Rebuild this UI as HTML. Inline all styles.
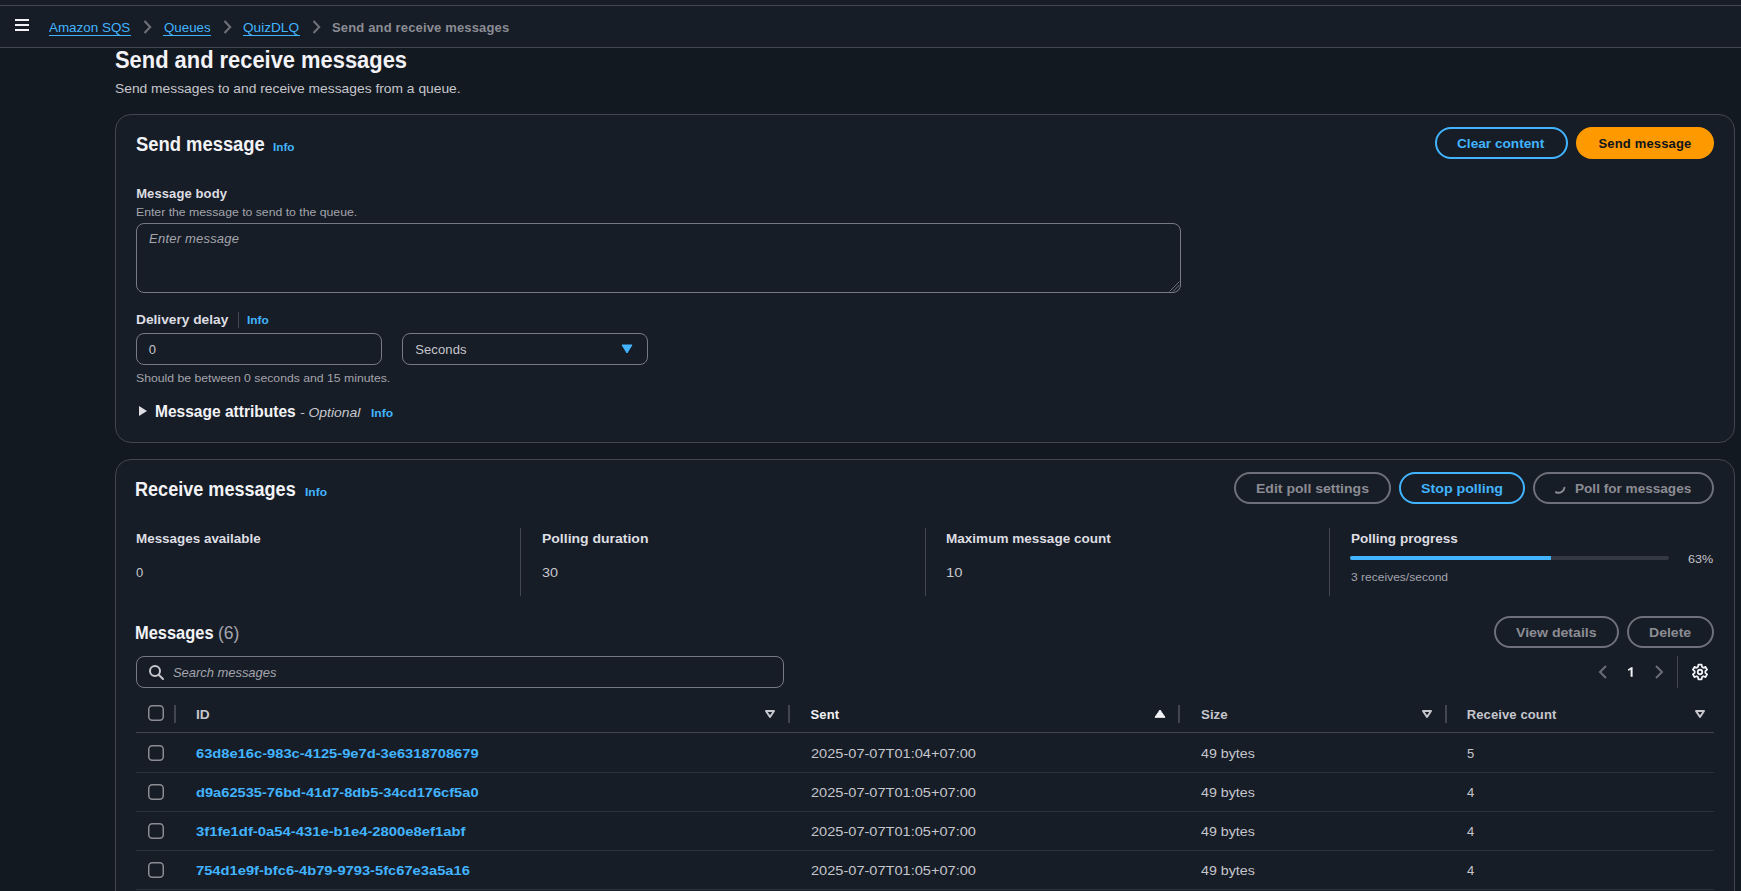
<!DOCTYPE html>
<html><head><meta charset="utf-8"><title>Send and receive messages</title>
<style>
html,body{margin:0;padding:0;}
body{width:1741px;height:891px;overflow:hidden;position:relative;background:#131920;font-family:"Liberation Sans",sans-serif;}
.t{position:absolute;white-space:nowrap;}
div{box-sizing:content-box;}
</style></head><body>
<div style="position:absolute;left:0px;top:0px;width:1741px;height:47px;background:#161d26"></div>
<div style="position:absolute;left:0px;top:5px;width:1741px;height:1px;background:#424650"></div>
<div style="position:absolute;left:0px;top:47px;width:1741px;height:1px;background:#424650"></div>
<div style="position:absolute;left:15px;top:19px;width:14px;height:2px;background:#f3f3f7"></div>
<div style="position:absolute;left:15px;top:24px;width:14px;height:2px;background:#f3f3f7"></div>
<div style="position:absolute;left:15px;top:29px;width:14px;height:2px;background:#f3f3f7"></div>
<div style="position:absolute;left:49px;top:35px;width:82px;height:1px;background:#42b4ff"></div>
<div style="position:absolute;left:163px;top:35px;width:48px;height:1px;background:#42b4ff"></div>
<div style="position:absolute;left:243px;top:35px;width:57px;height:1px;background:#42b4ff"></div>
<svg style="position:absolute;left:143px;top:20px" width="9" height="14" viewBox="0 0 9 14"><path d="M1.5 1 L7.2 7 L1.5 13" fill="none" stroke="#6f727b" stroke-width="2"/></svg>
<svg style="position:absolute;left:223px;top:20px" width="9" height="14" viewBox="0 0 9 14"><path d="M1.5 1 L7.2 7 L1.5 13" fill="none" stroke="#6f727b" stroke-width="2"/></svg>
<svg style="position:absolute;left:312px;top:20px" width="9" height="14" viewBox="0 0 9 14"><path d="M1.5 1 L7.2 7 L1.5 13" fill="none" stroke="#6f727b" stroke-width="2"/></svg>
<div style="position:absolute;left:115px;top:114px;width:1618px;height:327px;background:#161d26;border:1px solid #424650;border-radius:16px"></div>
<div style="position:absolute;left:1435px;top:127px;width:129px;height:28px;border:2px solid #42b4ff;border-radius:20px"></div>
<div style="position:absolute;left:1576px;top:127px;width:138px;height:32px;background:#ff9900;border-radius:20px"></div>
<div style="position:absolute;left:136px;top:223px;width:1043px;height:68px;border:1px solid #777a83;border-radius:8px"></div>
<svg style="position:absolute;left:1169px;top:281px" width="11" height="11" viewBox="0 0 11 11"><path d="M10.5 0.5 L0.5 10.5 M10.5 4 L4 10.5 M10.5 7.5 L7.5 10.5" stroke="#6e7079" stroke-width="1"/></svg>
<div style="position:absolute;left:238px;top:312px;width:1px;height:16px;background:#424650"></div>
<div style="position:absolute;left:136px;top:333px;width:244px;height:30px;border:1px solid #777a83;border-radius:8px"></div>
<div style="position:absolute;left:402px;top:333px;width:244px;height:30px;border:1px solid #777a83;border-radius:8px"></div>
<svg style="position:absolute;left:621px;top:344px" width="12" height="10" viewBox="0 0 12 10"><path d="M1 1 L11 1 L6 9 Z" fill="#42b4ff" stroke="#42b4ff" stroke-width="1" stroke-linejoin="round"/></svg>
<svg style="position:absolute;left:138px;top:405px" width="10" height="12" viewBox="0 0 10 12"><path d="M1 1 L9 6 L1 11 Z" fill="#dedee3"/></svg>
<div style="position:absolute;left:115px;top:459px;width:1618px;height:460px;background:#161d26;border:1px solid #424650;border-radius:16px"></div>
<div style="position:absolute;left:1234px;top:472px;width:153px;height:28px;border:2px solid #6e7079;border-radius:20px"></div>
<div style="position:absolute;left:1399px;top:472px;width:122px;height:28px;border:2px solid #42b4ff;border-radius:20px"></div>
<div style="position:absolute;left:1533px;top:472px;width:177px;height:28px;border:2px solid #6e7079;border-radius:20px"></div>
<svg style="position:absolute;left:1553px;top:481px" width="16" height="16" viewBox="0 0 16 16"><path d="M11.41 6.84 A6 6 0 0 1 2.96 11.24" fill="none" stroke="#8c8c94" stroke-width="2" stroke-linecap="round"/></svg>
<div style="position:absolute;left:520px;top:528px;width:1px;height:68px;background:#424650"></div>
<div style="position:absolute;left:925px;top:528px;width:1px;height:68px;background:#424650"></div>
<div style="position:absolute;left:1329px;top:528px;width:1px;height:68px;background:#424650"></div>
<div style="position:absolute;left:1350px;top:556px;width:319px;height:4px;background:#333843;border-radius:2px"></div>
<div style="position:absolute;left:1350px;top:556px;width:201px;height:4px;background:#42b4ff;border-radius:2px 0 0 2px"></div>
<div style="position:absolute;left:1494px;top:616px;width:121px;height:28px;border:2px solid #6e7079;border-radius:20px"></div>
<div style="position:absolute;left:1627px;top:616px;width:83px;height:28px;border:2px solid #6e7079;border-radius:20px"></div>
<div style="position:absolute;left:136px;top:656px;width:646px;height:30px;border:1px solid #777a83;border-radius:8px"></div>
<svg style="position:absolute;left:148px;top:664px" width="17" height="17" viewBox="0 0 17 17"><circle cx="7" cy="7" r="5" fill="none" stroke="#c6c6cd" stroke-width="2"/><path d="M10.7 10.7 L15 15" stroke="#c6c6cd" stroke-width="2" stroke-linecap="round"/></svg>
<svg style="position:absolute;left:1598px;top:665px" width="10" height="15" viewBox="0 0 10 15"><path d="M8 1 L2 7 L8 13" fill="none" stroke="#6a6d76" stroke-width="2"/></svg>
<svg style="position:absolute;left:1627px;top:667px" width="8" height="10" viewBox="0 0 8 10"><path d="M0.8 2.6 L4.2 0.3 L5.6 0.3 L5.6 9.8 L3.6 9.8 L3.6 2.6 L1.6 3.9 Z" fill="#f3f3f7"/></svg>
<svg style="position:absolute;left:1655px;top:665px" width="10" height="15" viewBox="0 0 10 15"><path d="M1 1 L7 7 L1 13" fill="none" stroke="#6a6d76" stroke-width="2"/></svg>
<div style="position:absolute;left:1677px;top:656px;width:1px;height:32px;background:#424650"></div>
<svg style="position:absolute;left:1691px;top:663px" width="18" height="18" viewBox="0 0 16 16">
<path d="M6.6 1.5h2.8l.4 2 1.2.7 1.9-.7 1.4 2.4-1.5 1.3v1.6l1.5 1.3-1.4 2.4-1.9-.7-1.2.7-.4 2H6.6l-.4-2-1.2-.7-1.9.7-1.4-2.4 1.5-1.3V7.2L1.7 5.9l1.4-2.4 1.9.7 1.2-.7z" fill="none" stroke="#f3f3f7" stroke-width="1.6" stroke-linejoin="round"/>
<circle cx="8" cy="8" r="2" fill="none" stroke="#f3f3f7" stroke-width="1.6"/></svg>
<svg style="position:absolute;left:148px;top:705px" width="16" height="16" viewBox="0 0 16 16"><rect x="0.75" y="0.75" width="14.5" height="14.5" rx="3.5" fill="none" stroke="#8c8c94" stroke-width="1.5"/></svg>
<div style="position:absolute;left:174px;top:705px;width:2px;height:18px;background:#424650"></div>
<svg style="position:absolute;left:764px;top:709px" width="12" height="10" viewBox="0 0 12 10"><path d="M2 2 L10 2 L6 8 Z" fill="none" stroke="#c6c6cd" stroke-width="2" stroke-linejoin="round"/></svg>
<div style="position:absolute;left:788px;top:705px;width:2px;height:18px;background:#424650"></div>
<svg style="position:absolute;left:1154px;top:709px" width="12" height="10" viewBox="0 0 12 10"><path d="M1 8.3 L11 8.3 L6 1 Z" fill="#f3f3f7" stroke="#f3f3f7" stroke-width="1" stroke-linejoin="round"/></svg>
<div style="position:absolute;left:1178px;top:705px;width:2px;height:18px;background:#424650"></div>
<svg style="position:absolute;left:1421px;top:709px" width="12" height="10" viewBox="0 0 12 10"><path d="M2 2 L10 2 L6 8 Z" fill="none" stroke="#c6c6cd" stroke-width="2" stroke-linejoin="round"/></svg>
<div style="position:absolute;left:1445px;top:705px;width:2px;height:18px;background:#424650"></div>
<svg style="position:absolute;left:1694px;top:709px" width="12" height="10" viewBox="0 0 12 10"><path d="M2 2 L10 2 L6 8 Z" fill="none" stroke="#c6c6cd" stroke-width="2" stroke-linejoin="round"/></svg>
<div style="position:absolute;left:136px;top:732px;width:1578px;height:1px;background:#424650"></div>
<svg style="position:absolute;left:148px;top:745px" width="16" height="16" viewBox="0 0 16 16"><rect x="0.75" y="0.75" width="14.5" height="14.5" rx="3.5" fill="none" stroke="#8c8c94" stroke-width="1.5"/></svg>
<div style="position:absolute;left:136px;top:772px;width:1578px;height:1px;background:#2a313b"></div>
<svg style="position:absolute;left:148px;top:784px" width="16" height="16" viewBox="0 0 16 16"><rect x="0.75" y="0.75" width="14.5" height="14.5" rx="3.5" fill="none" stroke="#8c8c94" stroke-width="1.5"/></svg>
<div style="position:absolute;left:136px;top:811px;width:1578px;height:1px;background:#2a313b"></div>
<svg style="position:absolute;left:148px;top:823px" width="16" height="16" viewBox="0 0 16 16"><rect x="0.75" y="0.75" width="14.5" height="14.5" rx="3.5" fill="none" stroke="#8c8c94" stroke-width="1.5"/></svg>
<div style="position:absolute;left:136px;top:850px;width:1578px;height:1px;background:#2a313b"></div>
<svg style="position:absolute;left:148px;top:862px" width="16" height="16" viewBox="0 0 16 16"><rect x="0.75" y="0.75" width="14.5" height="14.5" rx="3.5" fill="none" stroke="#8c8c94" stroke-width="1.5"/></svg>
<div style="position:absolute;left:136px;top:889px;width:1578px;height:1px;background:#2a313b"></div>
<div class="t" style="left:49.20px;top:18.90px;font-size:13px;line-height:17px;font-weight:400;color:#42b4ff;transform:scaleX(1.0318);transform-origin:0 0;">Amazon SQS</div>
<div class="t" style="left:163.70px;top:18.90px;font-size:13px;line-height:17px;font-weight:400;color:#42b4ff;transform:scaleX(1.0232);transform-origin:0 0;">Queues</div>
<div class="t" style="left:243.40px;top:18.90px;font-size:13px;line-height:17px;font-weight:400;color:#42b4ff;transform:scaleX(1.0478);transform-origin:0 0;">QuizDLQ</div>
<div class="t" style="left:332.00px;top:18.90px;font-size:13px;line-height:17px;font-weight:700;color:#8c8c94;letter-spacing:0.158px;">Send and receive messages</div>
<div class="t" style="left:115.00px;top:44.90px;font-size:23.5px;line-height:31px;font-weight:700;color:#f3f3f7;transform:scaleX(0.9313);transform-origin:0 0;">Send and receive messages</div>
<div class="t" style="left:115.00px;top:79.70px;font-size:13px;line-height:17px;font-weight:400;color:#c6c6cd;transform:scaleX(1.0629);transform-origin:0 0;">Send messages to and receive messages from a queue.</div>
<div class="t" style="left:135.90px;top:130.80px;font-size:20px;line-height:26px;font-weight:700;color:#f3f3f7;transform:scaleX(0.9196);transform-origin:0 0;">Send message</div>
<div class="t" style="left:273.20px;top:139.80px;font-size:11px;line-height:14px;font-weight:700;color:#42b4ff;transform:scaleX(1.0666);transform-origin:0 0;">Info</div>
<div class="t" style="left:1457.20px;top:135.20px;font-size:13px;line-height:17px;font-weight:700;color:#42b4ff;transform:scaleX(1.0496);transform-origin:0 0;">Clear content</div>
<div class="t" style="left:1598.50px;top:135.20px;font-size:13px;line-height:17px;font-weight:700;color:#0f141a;letter-spacing:0.162px;">Send message</div>
<div class="t" style="left:136.20px;top:185.00px;font-size:13px;line-height:17px;font-weight:700;color:#dedee3;letter-spacing:0.104px;">Message body</div>
<div class="t" style="left:136.20px;top:204.70px;font-size:11px;line-height:14px;font-weight:400;color:#a4a4ad;transform:scaleX(1.1128);transform-origin:0 0;">Enter the message to send to the queue.</div>
<div class="t" style="left:149.10px;top:229.90px;font-size:13px;line-height:17px;font-weight:400;color:#a4a4ad;font-style:italic;letter-spacing:0.200px;">Enter message</div>
<div class="t" style="left:136.20px;top:311.00px;font-size:13px;line-height:17px;font-weight:700;color:#dedee3;transform:scaleX(1.0554);transform-origin:0 0;">Delivery delay</div>
<div class="t" style="left:246.80px;top:313.00px;font-size:11px;line-height:14px;font-weight:700;color:#42b4ff;transform:scaleX(1.0813);transform-origin:0 0;">Info</div>
<div class="t" style="left:148.80px;top:341.10px;font-size:13px;line-height:17px;font-weight:400;color:#c6c6cd;">0</div>
<div class="t" style="left:415.20px;top:341.10px;font-size:13px;line-height:17px;font-weight:400;color:#c6c6cd;letter-spacing:0.118px;">Seconds</div>
<div class="t" style="left:136.20px;top:371.00px;font-size:11px;line-height:14px;font-weight:400;color:#a4a4ad;transform:scaleX(1.1117);transform-origin:0 0;">Should be between 0 seconds and 15 minutes.</div>
<div class="t" style="left:155.06px;top:400.90px;font-size:16.5px;line-height:21px;font-weight:700;color:#f3f3f7;transform:scaleX(0.9414);transform-origin:0 0;">Message attributes</div>
<div class="t" style="left:300.40px;top:403.90px;font-size:13px;line-height:17px;font-weight:400;color:#c6c6cd;font-style:italic;transform:scaleX(1.0718);transform-origin:0 0;">- Optional</div>
<div class="t" style="left:370.60px;top:405.90px;font-size:11px;line-height:14px;font-weight:700;color:#42b4ff;transform:scaleX(1.0960);transform-origin:0 0;">Info</div>
<div class="t" style="left:135.40px;top:475.80px;font-size:20px;line-height:26px;font-weight:700;color:#f3f3f7;transform:scaleX(0.9033);transform-origin:0 0;">Receive messages</div>
<div class="t" style="left:304.60px;top:484.80px;font-size:11px;line-height:14px;font-weight:700;color:#42b4ff;transform:scaleX(1.0911);transform-origin:0 0;">Info</div>
<div class="t" style="left:1256.00px;top:480.00px;font-size:13px;line-height:17px;font-weight:700;color:#8c8c94;transform:scaleX(1.0785);transform-origin:0 0;">Edit poll settings</div>
<div class="t" style="left:1420.70px;top:480.00px;font-size:13px;line-height:17px;font-weight:700;color:#42b4ff;transform:scaleX(1.0925);transform-origin:0 0;">Stop polling</div>
<div class="t" style="left:1575.40px;top:480.00px;font-size:13px;line-height:17px;font-weight:700;color:#8c8c94;transform:scaleX(1.0447);transform-origin:0 0;">Poll for messages</div>
<div class="t" style="left:135.90px;top:529.90px;font-size:13px;line-height:17px;font-weight:700;color:#dedee3;transform:scaleX(1.0327);transform-origin:0 0;">Messages available</div>
<div class="t" style="left:135.90px;top:563.90px;font-size:13px;line-height:17px;font-weight:400;color:#c6c6cd;">0</div>
<div class="t" style="left:541.60px;top:529.90px;font-size:13px;line-height:17px;font-weight:700;color:#dedee3;transform:scaleX(1.0758);transform-origin:0 0;">Polling duration</div>
<div class="t" style="left:541.60px;top:563.90px;font-size:13px;line-height:17px;font-weight:400;color:#c6c6cd;transform:scaleX(1.1103);transform-origin:0 0;">30</div>
<div class="t" style="left:945.90px;top:529.90px;font-size:13px;line-height:17px;font-weight:700;color:#dedee3;transform:scaleX(1.0416);transform-origin:0 0;">Maximum message count</div>
<div class="t" style="left:945.90px;top:563.90px;font-size:13px;line-height:17px;font-weight:400;color:#c6c6cd;transform:scaleX(1.1384);transform-origin:0 0;">10</div>
<div class="t" style="left:1350.60px;top:530.00px;font-size:13px;line-height:17px;font-weight:700;color:#dedee3;transform:scaleX(1.0416);transform-origin:0 0;">Polling progress</div>
<div class="t" style="left:1688.00px;top:552.20px;font-size:11px;line-height:14px;font-weight:400;color:#c6c6cd;transform:scaleX(1.1378);transform-origin:0 0;">63%</div>
<div class="t" style="left:1350.60px;top:570.30px;font-size:11px;line-height:14px;font-weight:400;color:#a4a4ad;transform:scaleX(1.0944);transform-origin:0 0;">3 receives/second</div>
<div class="t" style="left:135.21px;top:621.10px;font-size:18.5px;line-height:24px;font-weight:700;color:#f3f3f7;transform:scaleX(0.8881);transform-origin:0 0;">Messages</div>
<div class="t" style="left:218.05px;top:621.10px;font-size:18.5px;line-height:24px;font-weight:400;color:#a4a4ad;transform:scaleX(0.9464);transform-origin:0 0;">(6)</div>
<div class="t" style="left:1515.90px;top:623.90px;font-size:13px;line-height:17px;font-weight:700;color:#8c8c94;transform:scaleX(1.0871);transform-origin:0 0;">View details</div>
<div class="t" style="left:1649.20px;top:623.90px;font-size:13px;line-height:17px;font-weight:700;color:#8c8c94;transform:scaleX(1.0802);transform-origin:0 0;">Delete</div>
<div class="t" style="left:173.00px;top:663.80px;font-size:13px;line-height:17px;font-weight:400;color:#a4a4ad;font-style:italic;letter-spacing:-0.046px;">Search messages</div>
<div class="t" style="left:196.00px;top:706.10px;font-size:13px;line-height:17px;font-weight:700;color:#c6c6cd;transform:scaleX(1.0546);transform-origin:0 0;">ID</div>
<div class="t" style="left:810.50px;top:706.10px;font-size:13px;line-height:17px;font-weight:700;color:#f3f3f7;letter-spacing:0.153px;">Sent</div>
<div class="t" style="left:1200.50px;top:706.10px;font-size:13px;line-height:17px;font-weight:700;color:#c6c6cd;transform:scaleX(1.0239);transform-origin:0 0;">Size</div>
<div class="t" style="left:1466.70px;top:706.10px;font-size:13px;line-height:17px;font-weight:700;color:#c6c6cd;letter-spacing:0.124px;">Receive count</div>
<div class="t" style="left:195.70px;top:744.70px;font-size:13px;line-height:17px;font-weight:700;color:#42b4ff;transform:scaleX(1.1298);transform-origin:0 0;">63d8e16c-983c-4125-9e7d-3e6318708679</div>
<div class="t" style="left:810.50px;top:744.70px;font-size:13px;line-height:17px;font-weight:400;color:#c6c6cd;transform:scaleX(1.1214);transform-origin:0 0;">2025-07-07T01:04+07:00</div>
<div class="t" style="left:1200.50px;top:744.70px;font-size:13px;line-height:17px;font-weight:400;color:#c6c6cd;transform:scaleX(1.0938);transform-origin:0 0;">49 bytes</div>
<div class="t" style="left:1467.10px;top:744.70px;font-size:13px;line-height:17px;font-weight:400;color:#c6c6cd;">5</div>
<div class="t" style="left:195.70px;top:783.70px;font-size:13px;line-height:17px;font-weight:700;color:#42b4ff;transform:scaleX(1.1268);transform-origin:0 0;">d9a62535-76bd-41d7-8db5-34cd176cf5a0</div>
<div class="t" style="left:810.50px;top:783.70px;font-size:13px;line-height:17px;font-weight:400;color:#c6c6cd;transform:scaleX(1.1214);transform-origin:0 0;">2025-07-07T01:05+07:00</div>
<div class="t" style="left:1200.50px;top:783.70px;font-size:13px;line-height:17px;font-weight:400;color:#c6c6cd;transform:scaleX(1.0938);transform-origin:0 0;">49 bytes</div>
<div class="t" style="left:1467.10px;top:783.70px;font-size:13px;line-height:17px;font-weight:400;color:#c6c6cd;">4</div>
<div class="t" style="left:195.70px;top:822.70px;font-size:13px;line-height:17px;font-weight:700;color:#42b4ff;transform:scaleX(1.1402);transform-origin:0 0;">3f1fe1df-0a54-431e-b1e4-2800e8ef1abf</div>
<div class="t" style="left:810.50px;top:822.70px;font-size:13px;line-height:17px;font-weight:400;color:#c6c6cd;transform:scaleX(1.1214);transform-origin:0 0;">2025-07-07T01:05+07:00</div>
<div class="t" style="left:1200.50px;top:822.70px;font-size:13px;line-height:17px;font-weight:400;color:#c6c6cd;transform:scaleX(1.0938);transform-origin:0 0;">49 bytes</div>
<div class="t" style="left:1467.10px;top:822.70px;font-size:13px;line-height:17px;font-weight:400;color:#c6c6cd;">4</div>
<div class="t" style="left:195.70px;top:861.70px;font-size:13px;line-height:17px;font-weight:700;color:#42b4ff;transform:scaleX(1.1312);transform-origin:0 0;">754d1e9f-bfc6-4b79-9793-5fc67e3a5a16</div>
<div class="t" style="left:810.50px;top:861.70px;font-size:13px;line-height:17px;font-weight:400;color:#c6c6cd;transform:scaleX(1.1214);transform-origin:0 0;">2025-07-07T01:05+07:00</div>
<div class="t" style="left:1200.50px;top:861.70px;font-size:13px;line-height:17px;font-weight:400;color:#c6c6cd;transform:scaleX(1.0938);transform-origin:0 0;">49 bytes</div>
<div class="t" style="left:1467.10px;top:861.70px;font-size:13px;line-height:17px;font-weight:400;color:#c6c6cd;">4</div>
</body></html>
